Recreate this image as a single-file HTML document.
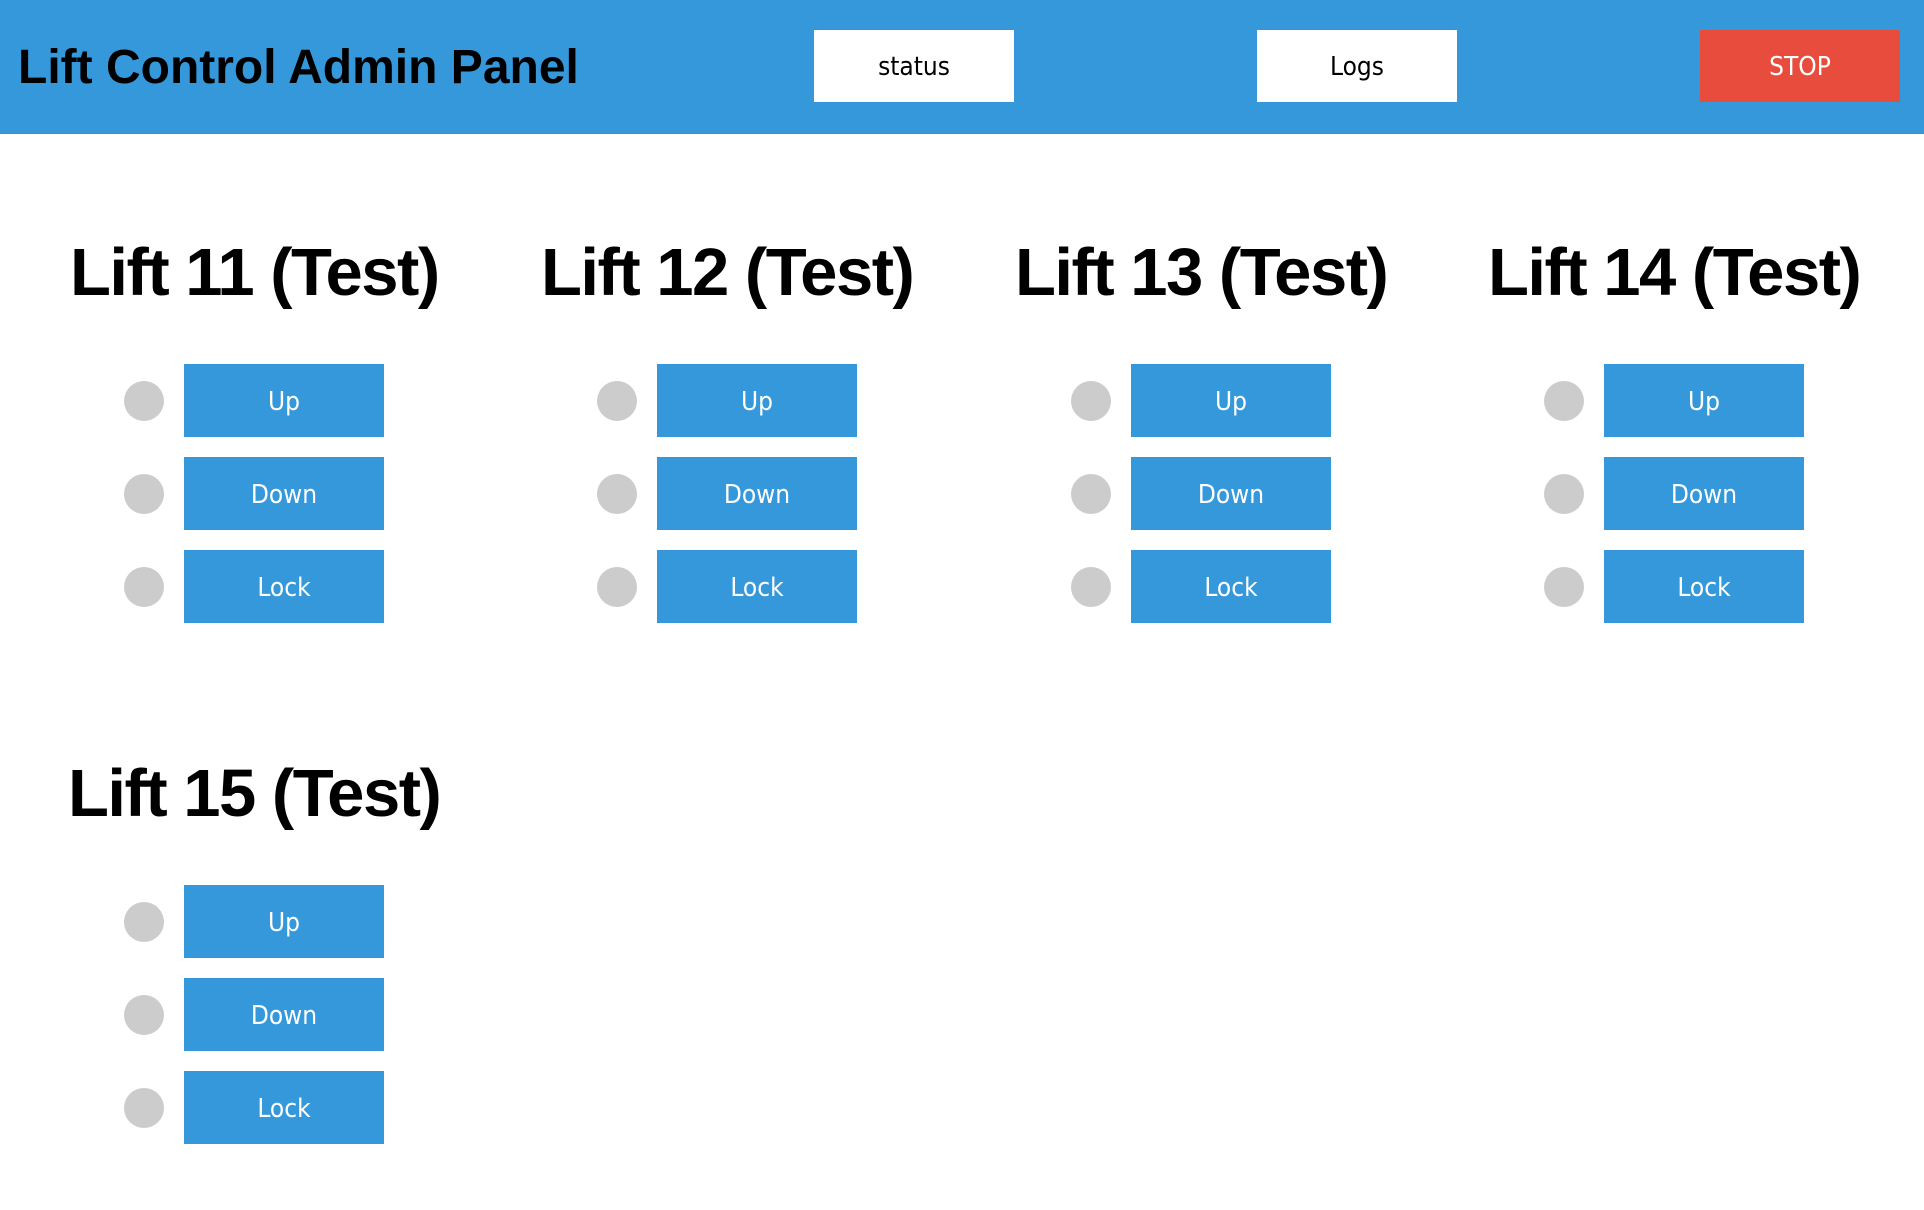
<!DOCTYPE html>
<html><head><meta charset="utf-8"><style>
*{margin:0;padding:0;box-sizing:border-box}
body{width:1924px;height:1210px;background:#fff;font-family:"Liberation Sans",Arial,sans-serif;position:relative;overflow:hidden}
.hdr{position:absolute;left:0;top:0;width:1924px;height:134px;background:#3498db}
.title{position:absolute;left:18px;top:40px;font-size:48px;font-weight:bold;color:#000;line-height:56px;white-space:nowrap}
.hb{position:absolute;top:30px;width:200px;height:72px;background:#fff;color:#000;font-family:"DejaVu Sans Condensed","DejaVu Sans",sans-serif;font-size:26px;display:flex;align-items:center;justify-content:center;padding-top:2px}
.stop{background:#e74c3c;color:#fff}
h2{position:absolute;font-size:67px;font-weight:bold;line-height:80px;white-space:nowrap;color:#000;letter-spacing:-1.5px}
.c{position:absolute;width:40px;height:40px;border-radius:50%;background:#ccc}
.b{position:absolute;width:200px;height:73px;background:#3498db;color:#fff;font-family:"DejaVu Sans Condensed","DejaVu Sans",sans-serif;font-size:26px;display:flex;align-items:center;justify-content:center;padding-top:2px}
</style></head><body>
<div class="hdr">
<div class="title">Lift Control Admin Panel</div>
<div class="hb" style="left:814px">status</div>
<div class="hb" style="left:1257px">Logs</div>
<div class="hb stop" style="left:1700px">STOP</div>
</div>

<h2 style="left:70px;top:233px">Lift 11 (Test)</h2>
<div class="c" style="left:124px;top:381px"></div><div class="b" style="left:184px;top:364px">Up</div>
<div class="c" style="left:124px;top:474px"></div><div class="b" style="left:184px;top:457px">Down</div>
<div class="c" style="left:124px;top:567px"></div><div class="b" style="left:184px;top:550px">Lock</div>

<h2 style="left:541px;top:233px">Lift 12 (Test)</h2>
<div class="c" style="left:597px;top:381px"></div><div class="b" style="left:657px;top:364px">Up</div>
<div class="c" style="left:597px;top:474px"></div><div class="b" style="left:657px;top:457px">Down</div>
<div class="c" style="left:597px;top:567px"></div><div class="b" style="left:657px;top:550px">Lock</div>

<h2 style="left:1015px;top:233px">Lift 13 (Test)</h2>
<div class="c" style="left:1071px;top:381px"></div><div class="b" style="left:1131px;top:364px">Up</div>
<div class="c" style="left:1071px;top:474px"></div><div class="b" style="left:1131px;top:457px">Down</div>
<div class="c" style="left:1071px;top:567px"></div><div class="b" style="left:1131px;top:550px">Lock</div>

<h2 style="left:1488px;top:233px">Lift 14 (Test)</h2>
<div class="c" style="left:1544px;top:381px"></div><div class="b" style="left:1604px;top:364px">Up</div>
<div class="c" style="left:1544px;top:474px"></div><div class="b" style="left:1604px;top:457px">Down</div>
<div class="c" style="left:1544px;top:567px"></div><div class="b" style="left:1604px;top:550px">Lock</div>

<h2 style="left:68px;top:754px">Lift 15 (Test)</h2>
<div class="c" style="left:124px;top:902px"></div><div class="b" style="left:184px;top:885px">Up</div>
<div class="c" style="left:124px;top:995px"></div><div class="b" style="left:184px;top:978px">Down</div>
<div class="c" style="left:124px;top:1088px"></div><div class="b" style="left:184px;top:1071px">Lock</div>
</body></html>
